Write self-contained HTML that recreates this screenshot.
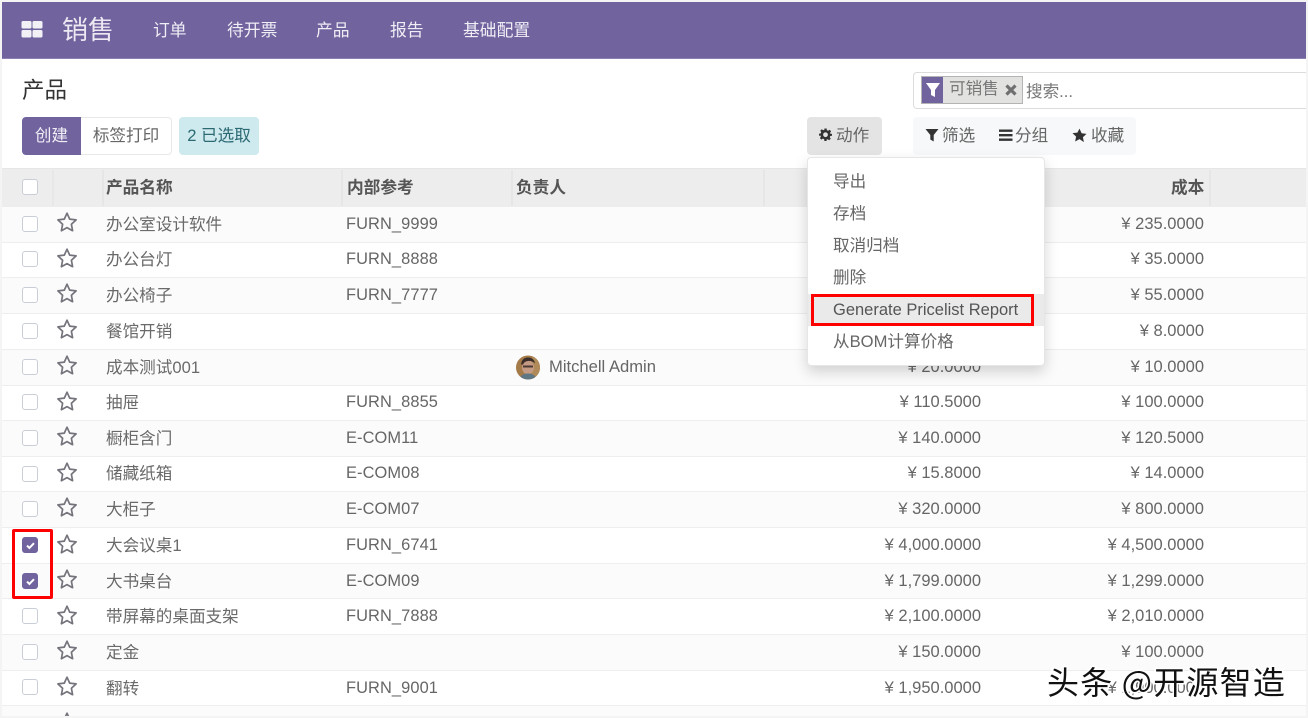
<!DOCTYPE html>
<html lang="zh"><head><meta charset="utf-8"><title>产品</title>
<style>
html,body{margin:0;padding:0;width:1308px;height:718px;overflow:hidden;background:#f4f4f4}
body{position:relative;font-family:"Liberation Sans","Noto Sans CJK SC",sans-serif;color:#666}
#w{position:absolute;left:0;top:0;width:1308px;height:718px;overflow:hidden;filter:blur(.35px)}
.a,.a *{box-sizing:border-box}
.a{position:absolute}
.t{position:absolute;white-space:nowrap;line-height:22px;height:22px}
.z{font-size:16.6px;color:#6a6a6a;margin-top:1px}
.l{font-size:16.4px;color:#666;letter-spacing:.1px}
.p{font-size:16.5px;color:#666;text-align:right}
.r{position:absolute;left:2px;width:1304px;border-bottom:1.5px solid #eceef0;box-sizing:border-box}
.o{background:#fbfbfb}.e{background:#fff}
.c{position:absolute;left:22px;width:16px;height:16px;border:1.5px solid #c9ced6;border-radius:3px;background:#fff;box-sizing:border-box}
.c.k{background:#71639e;border-color:#71639e}
.c.k svg{position:absolute;left:1.5px;top:1.5px}
.s{position:absolute;left:56px;width:22px;height:22px}
.n{position:absolute;top:20px;font-size:16.8px;color:#f0eef5;line-height:22px;white-space:nowrap}
.h{position:absolute;top:176.5px;font-size:16.7px;font-weight:700;color:#555;line-height:22px;white-space:nowrap}
.v{position:absolute;top:170px;width:2px;height:36px;background:#e6e6e6}
.m{position:absolute;left:833px;font-size:16.6px;color:#666;line-height:22px;white-space:nowrap}
.b{position:absolute;top:125px;font-size:16.6px;line-height:22px;color:#666;white-space:nowrap}
</style></head><body>
<svg width="0" height="0" style="position:absolute"><defs>
<symbol id="st" viewBox="0 0 22 22"><path d="M11 2.200l2.700 5.900 6.400.8-4.700 4.400 1.200 6.400L11 16.600l-5.600 3.100 1.200-6.400-4.700-4.400 6.400-.8z" fill="none" stroke="#74747c" stroke-width="1.700" stroke-linejoin="round"/></symbol>
<symbol id="ck" viewBox="0 0 11 11"><path d="M2 5.600l2.400 2.400L9 3.200" fill="none" stroke="#fff" stroke-width="2"/></symbol>
</defs></svg>
<div id="w">
<div class="a" style="left:2px;top:2px;width:1304px;height:714px;background:#fff"></div>
<div class="a" style="left:2px;top:2px;width:1304px;height:57px;background:#71639e;border-bottom:1px solid #8d80b3"></div>
<svg class="a" style="left:21px;top:20px" width="22" height="18"><rect x="0.5" y="1" width="10" height="7.500" rx="1.500" fill="#f2f1f6"/><rect x="11.500" y="1" width="10" height="7.500" rx="1.500" fill="#f2f1f6"/><rect x="0.5" y="10" width="10" height="7.500" rx="1.500" fill="#f2f1f6"/><rect x="11.500" y="10" width="10" height="7.500" rx="1.500" fill="#f2f1f6"/></svg>
<div class="a" style="left:62px;top:13px;font-size:26px;line-height:34px;color:#ece9f3;white-space:nowrap">销售</div>
<div class="n" style="left:153px">订单</div>
<div class="n" style="left:227px">待开票</div>
<div class="n" style="left:316px">产品</div>
<div class="n" style="left:390px">报告</div>
<div class="n" style="left:463px">基础配置</div>

<div class="a" style="left:22px;top:76px;font-size:22.500px;line-height:30px;color:#333">产品</div>
<div class="a" style="left:22px;top:117px;width:59px;height:38px;background:#71639e;border-radius:4px 0 0 4px;color:#f0eef5;font-size:16.600px;line-height:38px;text-align:center">创建</div>
<div class="a" style="left:81px;top:117px;width:91px;height:38px;background:#fff;border:1px solid #e6e8ea;border-left:0;border-radius:0 4px 4px 0;font-size:16.600px;line-height:36px;text-align:center;color:#666">标签打印</div>
<div class="a" style="left:179px;top:117px;width:80px;height:38px;background:#cfeaee;border-radius:4px;font-size:16.600px;line-height:38px;text-align:center;color:#2b6a73">2 已选取</div>

<div class="a" style="left:913px;top:72px;width:393px;height:37px;border:1px solid #dcdcdc;border-right:0;border-radius:4px 0 0 4px;background:#fff"></div>
<div class="a" style="left:921px;top:76px;width:102px;height:28px;background:#e2e2e0;border:1px solid #b4b4b4"></div>
<div class="a" style="left:922px;top:77px;width:21px;height:26px;background:#71639e"></div>
<svg class="a" style="left:925px;top:82px" width="16" height="16"><path d="M1 1h14L10 8v7L6 13V8z" fill="#fff"/></svg>
<div class="a" style="left:949px;top:78px;font-size:16.600px;line-height:22px;color:#777">可销售</div>
<svg class="a" style="left:1004px;top:83px" width="14" height="14"><path d="M2.500 2.500l9 9M11.500 2.500l-9 9" stroke="#6f6f6f" stroke-width="3.200"/></svg>
<div class="a" style="left:1026px;top:81px;font-size:16.600px;line-height:22px;color:#777">搜索...</div>

<div class="a" style="left:807px;top:117px;width:75px;height:38px;background:#e4e4e4;border-radius:4px"></div>
<svg class="a" style="left:819px;top:128px" width="13" height="13" viewBox="0 0 24 24"><path d="M10 1h4l.6 3.200 2.200.9 2.700-1.800 2.800 2.800-1.800 2.700.9 2.200L24 10.600v3.600l-3.200.6-.9 2.200 1.800 2.700-2.800 2.800-2.700-1.800-2.200.9L14 24h-4l-.6-3.400-2.200-.9-2.700 1.800-2.800-2.800 1.800-2.700-.9-2.200L0 14.200v-3.600l3.200-.6.9-2.200L2.300 5.100l2.800-2.800 2.700 1.800 2.200-.9zM12 8a4.400 4.400 0 1 0 0 8.800A4.400 4.400 0 0 0 12 8z" fill="#333" fill-rule="evenodd"/></svg>
<div class="b" style="left:836px">动作</div>

<div class="a" style="left:913px;top:117px;width:223px;height:38px;background:#f7f8f9;border-radius:4px"></div>
<svg class="a" style="left:925px;top:128px" width="14" height="14"><path d="M.5 1h13L8.700 7v6.500L5.300 11.500V7z" fill="#333"/></svg>
<div class="b" style="left:942px">筛选</div>
<svg class="a" style="left:998px;top:128px" width="15" height="14"><path d="M1 1.500h13.500v2.400H1zM1 6h13.500v2.400H1zM1 10.500h13.500v2.400H1z" fill="#333"/></svg>
<div class="b" style="left:1015px">分组</div>
<svg class="a" style="left:1072px;top:128px" width="15" height="15" viewBox="0 0 22 22"><path d="M11 1l3.100 6.700 7.200.9-5.300 5 1.400 7.200L11 16.300l-6.400 3.500L6 12.600l-5.300-5 7.200-.9z" fill="#333"/></svg>
<div class="b" style="left:1091px">收藏</div>

<!-- table header -->
<div class="a" style="left:2px;top:168px;width:1304px;height:39px;background:#ededed;border-top:1.500px solid #e4e6e8"></div>
<div class="c" style="top:179px;background:#fff"></div>
<div class="v" style="left:52px;background:#e8e8e8"></div>
<div class="v" style="left:102px"></div>
<div class="v" style="left:341px"></div>
<div class="v" style="left:511px"></div>
<div class="v" style="left:763px"></div>
<div class="v" style="left:1209px"></div>
<div class="h" style="left:106px">产品名称</div>
<div class="h" style="left:347px">内部参考</div>
<div class="h" style="left:516px">负责人</div>
<div class="h" style="left:1171px">成本</div>

<!-- rows -->
<div class="r o" style="top:207px;height:36px"></div>
<div class="r e" style="top:243px;height:35px"></div>
<div class="r o" style="top:278px;height:36px"></div>
<div class="r e" style="top:314px;height:36px"></div>
<div class="r o" style="top:350px;height:36px"></div>
<div class="r e" style="top:386px;height:35px"></div>
<div class="r o" style="top:421px;height:36px"></div>
<div class="r e" style="top:457px;height:35px"></div>
<div class="r o" style="top:492px;height:36px"></div>
<div class="r e" style="top:528px;height:36px"></div>
<div class="r o" style="top:564px;height:35px"></div>
<div class="r e" style="top:599px;height:36px"></div>
<div class="r o" style="top:635px;height:36px"></div>
<div class="r e" style="top:671px;height:35px"></div>
<div class="r o" style="top:706px;height:10px;border-bottom:0"></div>

<div class="c" style="top:216px"></div><svg class="s" style="top:211px"><use href="#st"/></svg>
<div class="c" style="top:251px"></div><svg class="s" style="top:247px"><use href="#st"/></svg>
<div class="c" style="top:287px"></div><svg class="s" style="top:282px"><use href="#st"/></svg>
<div class="c" style="top:323px"></div><svg class="s" style="top:318px"><use href="#st"/></svg>
<div class="c" style="top:359px"></div><svg class="s" style="top:354px"><use href="#st"/></svg>
<div class="c" style="top:394px"></div><svg class="s" style="top:390px"><use href="#st"/></svg>
<div class="c" style="top:430px"></div><svg class="s" style="top:425px"><use href="#st"/></svg>
<div class="c" style="top:466px"></div><svg class="s" style="top:461px"><use href="#st"/></svg>
<div class="c" style="top:501px"></div><svg class="s" style="top:496px"><use href="#st"/></svg>
<div class="c k" style="top:537px"><svg width="11" height="11"><use href="#ck"/></svg></div><svg class="s" style="top:533px"><use href="#st"/></svg>
<div class="c k" style="top:573px"><svg width="11" height="11"><use href="#ck"/></svg></div><svg class="s" style="top:568px"><use href="#st"/></svg>
<div class="c" style="top:608px"></div><svg class="s" style="top:604px"><use href="#st"/></svg>
<div class="c" style="top:644px"></div><svg class="s" style="top:639px"><use href="#st"/></svg>
<div class="c" style="top:679px"></div><svg class="s" style="top:675px"><use href="#st"/></svg>
<svg class="s" style="top:711px;height:5px" viewBox="0 0 22 5"><use href="#st" width="22" height="22"/></svg>

<div class="t z" style="left:106px;top:213px">办公室设计软件</div>
<div class="t z" style="left:106px;top:248px">办公台灯</div>
<div class="t z" style="left:106px;top:284px">办公椅子</div>
<div class="t z" style="left:106px;top:320px">餐馆开销</div>
<div class="t z" style="left:106px;top:356px">成本测试001</div>
<div class="t z" style="left:106px;top:391px">抽屉</div>
<div class="t z" style="left:106px;top:427px">橱柜含门</div>
<div class="t z" style="left:106px;top:462px">储藏纸箱</div>
<div class="t z" style="left:106px;top:498px">大柜子</div>
<div class="t z" style="left:106px;top:534px">大会议桌1</div>
<div class="t z" style="left:106px;top:570px">大书桌台</div>
<div class="t z" style="left:106px;top:605px">带屏幕的桌面支架</div>
<div class="t z" style="left:106px;top:641px">定金</div>
<div class="t z" style="left:106px;top:677px">翻转</div>

<div class="t l" style="left:346px;top:213px">FURN_9999</div>
<div class="t l" style="left:346px;top:248px">FURN_8888</div>
<div class="t l" style="left:346px;top:284px">FURN_7777</div>
<div class="t l" style="left:346px;top:391px">FURN_8855</div>
<div class="t l" style="left:346px;top:427px">E-COM11</div>
<div class="t l" style="left:346px;top:462px">E-COM08</div>
<div class="t l" style="left:346px;top:498px">E-COM07</div>
<div class="t l" style="left:346px;top:534px">FURN_6741</div>
<div class="t l" style="left:346px;top:570px">E-COM09</div>
<div class="t l" style="left:346px;top:605px">FURN_7888</div>
<div class="t l" style="left:346px;top:677px">FURN_9001</div>

<svg class="a" style="left:516px;top:355px" width="24" height="25" viewBox="0 0 24 24"><defs><clipPath id="av"><circle cx="12" cy="12" r="12"/></clipPath></defs><g clip-path="url(#av)"><rect width="24" height="24" fill="#a47a48"/><rect x="16" width="8" height="24" fill="#b08a58"/><ellipse cx="12" cy="12" rx="6" ry="7" fill="#c49a82"/><path d="M5 9q1-7 7-7t7 6q-3-3-7-2.500T7 9z" fill="#3a2c28"/><rect x="7" y="10" width="10" height="2" fill="#4a3a34"/><path d="M3 24q2-6 9-6t9 6z" fill="#5f7684"/></g></svg>
<div class="t" style="left:549px;top:356px;font-size:16.600px;color:#666">Mitchell Admin</div>

<div class="t p" style="right:327px;top:356px">¥ 20.0000</div>
<div class="t p" style="right:327px;top:391px">¥ 110.5000</div>
<div class="t p" style="right:327px;top:427px">¥ 140.0000</div>
<div class="t p" style="right:327px;top:462px">¥ 15.8000</div>
<div class="t p" style="right:327px;top:498px">¥ 320.0000</div>
<div class="t p" style="right:327px;top:534px">¥ 4,000.0000</div>
<div class="t p" style="right:327px;top:570px">¥ 1,799.0000</div>
<div class="t p" style="right:327px;top:605px">¥ 2,100.0000</div>
<div class="t p" style="right:327px;top:641px">¥ 150.0000</div>
<div class="t p" style="right:327px;top:677px">¥ 1,950.0000</div>

<div class="t p" style="right:104px;top:213px">¥ 235.0000</div>
<div class="t p" style="right:104px;top:248px">¥ 35.0000</div>
<div class="t p" style="right:104px;top:284px">¥ 55.0000</div>
<div class="t p" style="right:104px;top:320px">¥ 8.0000</div>
<div class="t p" style="right:104px;top:356px">¥ 10.0000</div>
<div class="t p" style="right:104px;top:391px">¥ 100.0000</div>
<div class="t p" style="right:104px;top:427px">¥ 120.5000</div>
<div class="t p" style="right:104px;top:462px">¥ 14.0000</div>
<div class="t p" style="right:104px;top:498px">¥ 800.0000</div>
<div class="t p" style="right:104px;top:534px">¥ 4,500.0000</div>
<div class="t p" style="right:104px;top:570px">¥ 1,299.0000</div>
<div class="t p" style="right:104px;top:605px">¥ 2,010.0000</div>
<div class="t p" style="right:104px;top:641px">¥ 100.0000</div>
<div class="t p" style="right:104px;top:677px">¥ 1,900.0000</div>

<!-- dropdown -->
<div class="a" style="left:807px;top:157px;width:238px;height:209px;background:#fff;border:1px solid #e6e6e6;border-radius:4px;box-shadow:0 6px 14px rgba(0,0,0,.17)"></div>
<div class="a" style="left:808px;top:294px;width:236px;height:32px;background:#eaeaea"></div>
<div class="m" style="top:171px">导出</div>
<div class="m" style="top:203px">存档</div>
<div class="m" style="top:235px">取消归档</div>
<div class="m" style="top:267px">删除</div>
<div class="m" style="top:299px;color:#555;font-size:16.500px">Generate Pricelist Report</div>
<div class="m" style="top:331px">从BOM计算价格</div>
<div class="a" style="left:811px;top:294px;width:223px;height:32px;border:3px solid #f00"></div>
<div class="a" style="left:12px;top:529px;width:41px;height:70px;border:3px solid #f00;border-radius:2px"></div>

<div class="a" style="left:1047px;top:662px;font-size:32px;line-height:38px;color:#111;white-space:nowrap;-webkit-text-stroke:3px #fff;paint-order:stroke fill;font-family:'Noto Sans CJK SC','Liberation Sans',sans-serif;letter-spacing:1.200px">头条 @开源智造</div>
</div>
</body></html>
